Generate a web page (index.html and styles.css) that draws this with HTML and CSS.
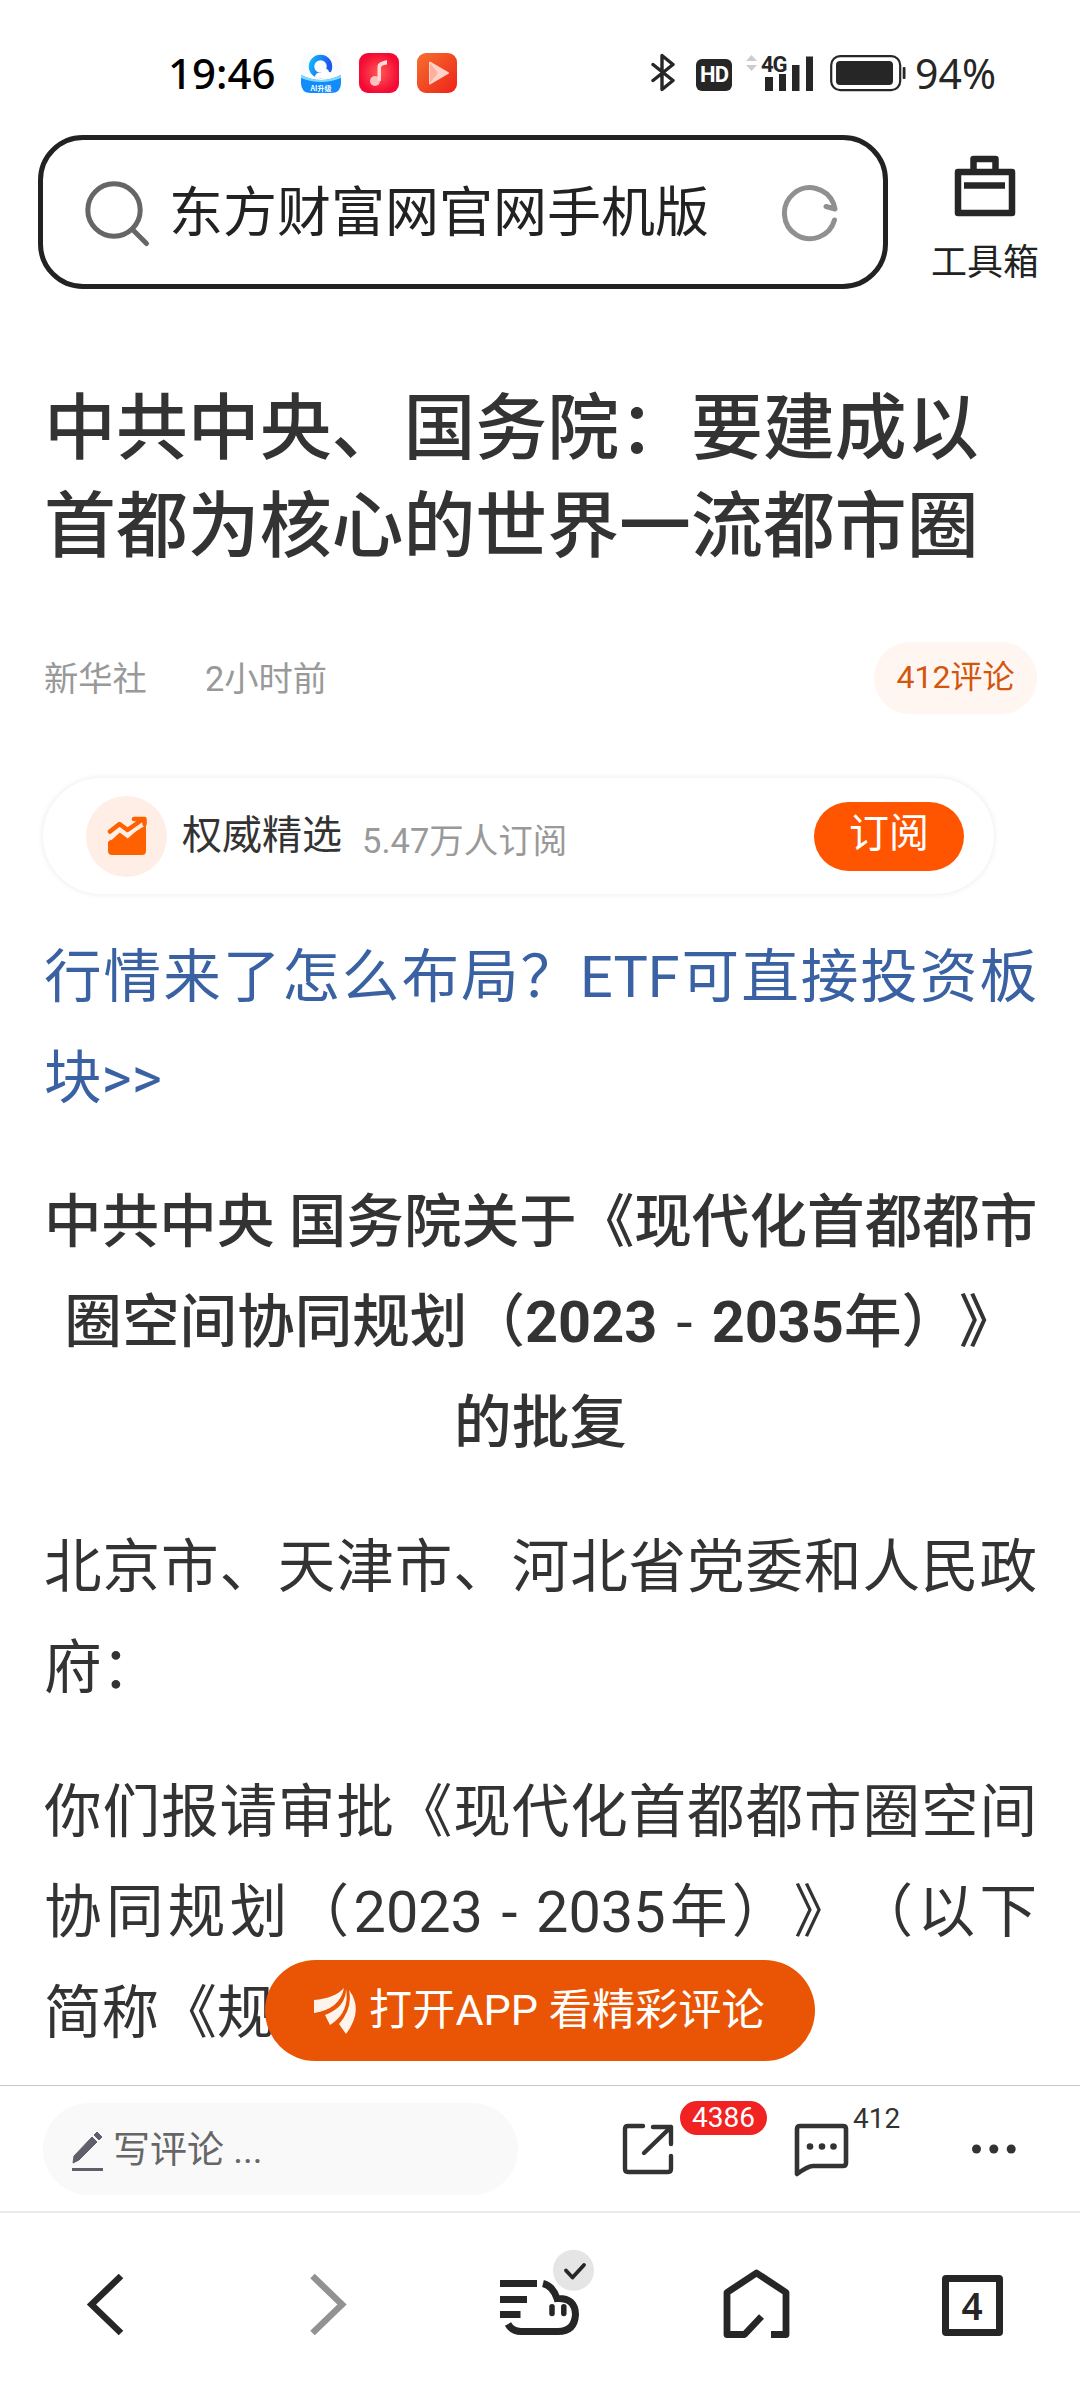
FILE: index.html
```html
<!DOCTYPE html>
<html lang="zh-CN">
<head>
    <meta charset="UTF-8">
    <meta name="viewport" content="width=device-width, initial-scale=1.0">
    <title>中共中央、国务院：要建成以首都为核心的世界一流都市圈</title>
    <link rel="stylesheet" href="styles.css">
</head>
<body>
    <div class="screen">
        <div class="status-bar">
            <span class="clock">19:46</span>
            <div class="app-icons">
                <svg width="40" height="40" viewBox="0 0 40 40">
                    <defs>
                        <linearGradient id="ring" x1="0" y1="0" x2="1" y2="0.3"><stop offset="0" stop-color="#12b4fb"/><stop offset="1" stop-color="#1d57ee"/></linearGradient>
                        <radialGradient id="red"><stop offset="0" stop-color="#ff5a56"/><stop offset="1" stop-color="#f40a34"/></radialGradient>
                        <linearGradient id="orange" x1="0" y1="0" x2="1" y2="1"><stop offset="0" stop-color="#f5712e"/><stop offset="1" stop-color="#ee2119"/></linearGradient>
                    </defs>
                    <rect width="40" height="40" rx="10" fill="#fafbfd"/>
                    <circle cx="19.500" cy="13.500" r="9" fill="none" stroke="url(#ring)" stroke-width="5.500"/>
                    <path d="M14 24c0-4 4-5 6-4 1-6 8-5 8-1 4 0 5 5 2 6H16z" fill="#fff"/>
                    <path d="M0 22q20 10 40 0v8q0 10-10 10H10Q0 40 0 30z" fill="#128bfb"/>
                    <path d="M0 22q20 10 40 0v3q-20 8-40 0z" fill="#7ed9ff"/>
                    <text x="20" y="37.500" class="app-label">AI升级</text>
                </svg>
                <svg width="40" height="40" viewBox="0 0 40 40">
                    <rect width="40" height="40" rx="9" fill="url(#red)"/>
                    <circle cx="16" cy="28" r="5" fill="#ffc0c0"/>
                    <path d="M18.500 28V13q0-4 9.500-6v4.500q-6 .5-6 3V28z" fill="#ffd9d8"/>
                </svg>
                <svg width="40" height="40" viewBox="0 0 40 40">
                    <rect width="40" height="40" rx="9" fill="url(#orange)"/>
                    <path d="M13 9.500l18 10.500-18 10.500z" fill="#ffd3ca" stroke="#ffd3ca" stroke-width="2" stroke-linejoin="round"/>
                    <path d="M13 10l8 10-8 10z" fill="#ffb09d"/>
                </svg>
            </div>
            <div class="system-icons">
                <svg width="24" height="40" viewBox="0 0 24 40">
                    <path d="M2 12l20 16-11 9V3l11 9L2 28" transform="translate(0 -.5)" fill="none" stroke="#262626" stroke-width="3.400" stroke-linejoin="round" stroke-linecap="round"/>
                </svg>
                <span class="hd">HD</span>
                <svg width="70" height="40" viewBox="743 52 70 40">
                    <path d="M745 60l5.500-6 5.500 6zM745 64h11l-5.500 6z" fill="#ccc"/>
                    <path d="M764 76h8v14h-8zM778 73h7v17h-7zM791 64h7.500v26H791zM805 55.500h7V90h-7z" fill="#262626"/>
                    <text x="760" y="70.500" class="net-label">4G</text>
                </svg>
                <svg width="77" height="40" viewBox="829 53 77 40">
                    <rect x="830.200" y="56.200" width="69" height="34" rx="9" fill="none" stroke="#262626" stroke-width="2.200"/>
                    <rect x="835" y="61" width="57" height="24" rx="4" fill="#262626"/>
                    <rect x="901.700" y="67" width="2.800" height="12" rx="1" fill="#262626"/>
                </svg>
                <span class="battery-text">94%</span>
            </div>
        </div>

        <div class="top-bar">
            <div class="search-box">
                <svg width="68" height="68" viewBox="0 0 68 68">
                    <g fill="none" stroke="#666" stroke-width="5" stroke-linecap="round"><circle cx="30" cy="30" r="26.200"/><path d="M49 50l13.500 13.500"/></g>
                </svg>
                <span class="search-text">东方财富网官网手机版</span>
                <svg class="refresh" width="58" height="58" viewBox="0 0 58 58">
                    <path d="M53.500 35A25.500 25.500 0 1 1 52.500 18.500l1.500 5.500-9-2.500" fill="none" stroke="#909090" stroke-width="5" stroke-linecap="round" stroke-linejoin="round"/>
                </svg>
            </div>
            <div class="toolbox">
                <svg width="62" height="62" viewBox="0 0 62 62">
                    <g fill="none" stroke="#262626" stroke-width="6.500" stroke-linejoin="round"><path d="M4 17h54v41H4zM19.500 17V4h22v13"/><path d="M10 30.500h41"/></g>
                </svg>
                <span>工具箱</span>
            </div>
        </div>

        <div class="article">
            <h1>中共中央、国务院：要建成以<br>首都为核心的世界一流都市圈</h1>
            <div class="meta">
                <span>新华社</span>
                <span>2小时前</span>
                <a class="comment-count">412评论</a>
            </div>
            <div class="subscribe-card">
                <div class="column-icon">
                    <svg width="40" height="40" viewBox="0 0 40 40">
                        <path d="M1 26l11-10.500 8 5.500L39 9v26q0 4-4 4H5q-4 0-4-4z" fill="#ff6100"/>
                        <path d="M1 20.500L12.500 10l8 6L36 2" fill="none" stroke="#ffeee6" stroke-width="10"/>
                        <path d="M3 15.500L12.500 8l8 6L34 4.500M27 3h10.500v5" fill="none" stroke="#ff6100" stroke-width="4.500" stroke-linecap="round" stroke-linejoin="round"/>
                    </svg>
                </div>
                <span class="column-name">权威精选</span>
                <span class="column-count">5.47万人订阅</span>
                <button class="subscribe-btn">订阅</button>
            </div>
            <div class="content">
                <p class="link"><span class="line">行情来了怎么布局？ETF可直接投资板</span>块&gt;&gt;</p>
                <p class="heading">中共中央 国务院关于《现代化首都都市<br>圈空间协同规划（<span class="years"><b>2023</b> - <b>2035</b></span>年）》<br>的批复</p>
                <p><span class="line">北京市、天津市、河北省党委和人民政</span>府：</p>
                <p><span class="line">你们报请审批《现代化首都都市圈空间</span><span class="line">协同规划（2023 - 2035年）》（以下</span>简称《规</p>
            </div>
            <a class="open-app">
                <svg width="42" height="46" viewBox="0 0 42 46">
                    <path d="M30 0Q21 10 0 12v13Q26 21 30 0zM32 1q0 18-21 26l5 10Q36 24 32 1zM35 2q4 18-10 34l7 10Q50 22 35 2z" fill="#fff4ec"/>
                </svg>
                <span>打开APP 看精彩评论</span>
            </a>
        </div>

        <div class="comment-bar">
            <div class="comment-input">
                <svg width="32" height="40" viewBox="0 0 32 40">
                    <path d="M1 32l1-7L20 6l5 5L7 29zM22 4l3-3 5 5-3 3z" fill="#5f606c" stroke="#5f606c" stroke-width="1" stroke-linejoin="round"/>
                    <path d="M0 37h31v3H0z" fill="#5f606c"/>
                </svg>
                <span>写评论 ...</span>
            </div>
            <div class="action share">
                <svg width="54" height="54" viewBox="0 0 54 54">
                    <path d="M22 4H7Q4 4 4 7v40q0 3 3 3h40q3 0 3-3V34M32 5h18v17M50 5L23 31" fill="none" stroke="#333" stroke-width="4.400" stroke-linecap="round" stroke-linejoin="round"/>
                </svg>
                <span class="badge">4386</span>
            </div>
            <div class="action comments">
                <svg width="56" height="56" viewBox="0 0 56 56">
                    <path d="M3 51V6q0-3 3-3h43q3 0 3 3v34q0 3-3 3H19q-5 0-16 8z" fill="none" stroke="#333" stroke-width="4.600" stroke-linejoin="round"/>
                    <g fill="#333"><circle cx="16" cy="23.500" r="3.300"/><circle cx="28" cy="23.500" r="3.300"/><circle cx="39.500" cy="23.500" r="3.300"/></g>
                </svg>
                <span class="count">412</span>
            </div>
            <svg class="more" width="46" height="12" viewBox="0 0 46 12">
                <g fill="#333"><circle cx="5.500" cy="6" r="4.500"/><circle cx="22.800" cy="6" r="4.500"/><circle cx="40.200" cy="6" r="4.500"/></g>
            </svg>
        </div>

        <div class="nav-bar">
            <svg width="120" height="120" viewBox="0 0 120 120">
                <path d="M73 31L43.500 59.500 73 88" fill="none" stroke="#262626" stroke-width="6.500"/>
            </svg>
            <svg width="120" height="120" viewBox="0 0 120 120">
                <path d="M48.500 31L78 59.500 48.500 88" fill="none" stroke="#929292" stroke-width="6.500"/>
            </svg>
            <svg width="120" height="120" viewBox="0 0 120 120">
                <g fill="none" stroke="#262626" stroke-width="7">
                    <path d="M20 38.500h37M20 54.500h27M20 69.500h20.500"/>
                    <path d="M63 38.500Q73 41 77 53.500Q95 52.500 95.500 69.500Q94.500 86.500 78 86.500H41Q32 86.500 28 79"/>
                    <path d="M72 61.800v6.800M83.800 61.800v6.800" stroke-width="5.500" stroke-linecap="round"/>
                </g>
                <circle cx="93.500" cy="25.300" r="20.500" fill="#e5e5e5"/>
                <path d="M86 25.500l6.500 7L104 20" fill="none" stroke="#262626" stroke-width="3.800" stroke-linecap="round" stroke-linejoin="round"/>
            </svg>
            <svg width="120" height="120" viewBox="0 0 120 120">
                <path d="M65.500 71.500L48.500 89.500H31V47.500L60.500 28 90 47.500v42H75" fill="none" stroke="#262626" stroke-width="6.800" stroke-linejoin="round"/>
            </svg>
            <span class="tabs">4</span>
        </div>
    </div>
</body>
</html>
```

FILE: styles.css
```css
* {
    margin: 0;
    padding: 0;
    box-sizing: border-box;
}

body {
    font-family: Roboto, 'Noto Sans CJK SC', sans-serif;
    background: #fff;
    color: #333;
    text-spacing-trim: space-all;
}

svg {
    display: block;
    flex-shrink: 0;
}

.screen {
    width: 1080px;
    height: 2400px;
    display: flex;
    flex-direction: column;
    overflow: hidden;
}

/* Status bar */
.status-bar {
    height: 135px;
    padding: 0 84px 0 168px;
    display: flex;
    align-items: flex-start;
    font-family: 'Noto Sans', sans-serif;
    font-weight: 500;
}

.clock {
    width: 133px;
    padding-top: 53px;
    font-size: 42px;
    line-height: 40px;
    color: #000;
    white-space: nowrap;
}

.app-icons {
    display: flex;
    gap: 18px;
    padding-top: 53px;
}

.app-label {
    font: bold 7px 'Noto Sans CJK SC', sans-serif;
    fill: #fff;
    text-anchor: middle;
}

.system-icons {
    margin-left: auto;
    padding-top: 53px;
    display: flex;
    align-items: center;
    color: #262626;
}

.hd {
    width: 36px;
    height: 32px;
    margin: 3px 12px 0 21px;
    border-radius: 6px;
    background: #262626;
    color: #fff;
    font: bold 22px/32px Roboto, sans-serif;
    letter-spacing: -1px;
    text-align: center;
}

.net-label {
    font: bold 22px Roboto, sans-serif;
    letter-spacing: -1px;
    fill: #262626;
}

.system-icons svg:nth-of-type(3) {
    margin-left: 16px;
}

.battery-text {
    margin-left: 8px;
    font-size: 41px;
    font-weight: 400;
    line-height: 40px;
}

/* Search bar */
.top-bar {
    height: 154px;
    padding-left: 38px;
    display: flex;
}

.search-box {
    width: 850px;
    height: 154px;
    border: 5.500px solid #222;
    border-radius: 45px;
    display: flex;
    align-items: center;
    padding: 3px 0 0 41px;
}

.search-text {
    margin-left: 17px;
    font-size: 54px;
    line-height: 80px;
    color: #222;
}

.refresh {
    margin-left: 72px;
}

.toolbox {
    width: 108px;
    margin-left: 43px;
    padding-top: 20px;
    display: flex;
    flex-direction: column;
    align-items: center;
    font-size: 36px;
    line-height: 50px;
    color: #222;
}

.toolbox span {
    margin-top: 21px;
    white-space: nowrap;
}

/* Article */
.article {
    position: relative;
    flex: 1;
    overflow: hidden;
    padding: 91px 43px 0 44px;
}

h1 {
    font-size: 71.900px;
    font-weight: 500;
    line-height: 98px;
    white-space: nowrap;
}

.meta {
    margin-top: 66px;
    height: 72px;
    display: flex;
    align-items: center;
    gap: 58px;
    font-size: 34.300px;
    color: #999;
}

.meta span {
    padding-bottom: 5px;
}

.comment-count {
    margin-left: auto;
    width: 163px;
    height: 72px;
    border-radius: 36px;
    background: #fff5f1;
    color: #d2560e;
    font-size: 32px;
    line-height: 71px;
    text-align: center;
}

.subscribe-card {
    margin: 64px 0 0 -1px;
    width: 951px;
    height: 116px;
    padding: 0 30px 0 43px;
    border-radius: 58px;
    box-shadow: 0 0 6px rgba(0, 0, 0, 0.09);
    display: flex;
    align-items: center;
}

.column-icon {
    width: 81px;
    height: 81px;
    border-radius: 50%;
    background: #ffeee6;
    display: flex;
    align-items: center;
    justify-content: center;
}

.column-name {
    margin-left: 15px;
    padding-bottom: 8px;
    font-size: 40px;
}

.column-count {
    margin-left: 20px;
    padding-top: 3px;
    font-size: 34.500px;
    color: #999;
}

.subscribe-btn {
    margin-left: auto;
    width: 150px;
    height: 69px;
    border: none;
    border-radius: 35px;
    background: #ff5500;
    color: #fff;
    font-family: inherit;
    font-size: 40px;
    line-height: 64px;
    padding-bottom: 5px;
}

.content {
    margin-top: 34px;
    font-size: 57.600px;
    line-height: 100.800px;
}

.content p {
    margin-bottom: 43px;
    white-space: nowrap;
}

.content .line {
    display: block;
    text-align: justify;
    text-align-last: justify;
    white-space: normal;
}

.content .link {
    color: #3a62a3;
}

.content .heading {
    font-weight: 500;
    text-align: center;
}

.years {
    font-weight: 400;
    word-spacing: 5px;
}

.open-app {
    position: absolute;
    left: 265px;
    bottom: 24px;
    width: 550px;
    height: 101px;
    padding-left: 49px;
    border-radius: 51px;
    background: #e95504;
    color: #fff;
    display: flex;
    align-items: center;
    gap: 13px;
    font-size: 43.200px;
    white-space: nowrap;
}

.open-app span {
    padding-bottom: 9px;
}

/* Comment bar */
.comment-bar {
    height: 126px;
    border-top: 1px solid #c8c8c8;
    padding-left: 43px;
    display: flex;
    align-items: center;
}

.comment-input {
    width: 475px;
    height: 92px;
    border-radius: 46px;
    padding-left: 29px;
    background: #f9f9f9;
    color: #666;
    display: flex;
    align-items: center;
    gap: 9px;
    font-size: 37px;
}

.comment-input svg {
    margin-top: 4px;
}

.comment-input span {
    padding-bottom: 4px;
}

.action {
    position: relative;
}

.share {
    margin-left: 103px;
}

.comments {
    margin-left: 119px;
    padding-top: 5px;
}

.badge,
.count {
    position: absolute;
    left: 59px;
    font-size: 28px;
    line-height: 34px;
}

.badge {
    top: -21px;
    width: 87px;
    height: 34px;
    border-radius: 17px;
    background: #f12222;
    color: #fff;
    text-align: center;
}

.count {
    top: -16px;
}

.more {
    margin-left: 121px;
}

/* Browser navigation */
.nav-bar {
    height: 189px;
    padding-bottom: 3px;
    border-top: 2px solid #ebebeb;
    display: grid;
    grid-template-columns: repeat(5, 1fr);
    align-items: center;
    justify-items: center;
}

.tabs {
    width: 61px;
    height: 61px;
    border: 7px solid #262626;
    border-radius: 4px;
    color: #262626;
    font: 600 37px/47px 'Noto Sans', sans-serif;
    text-align: center;
}
```
